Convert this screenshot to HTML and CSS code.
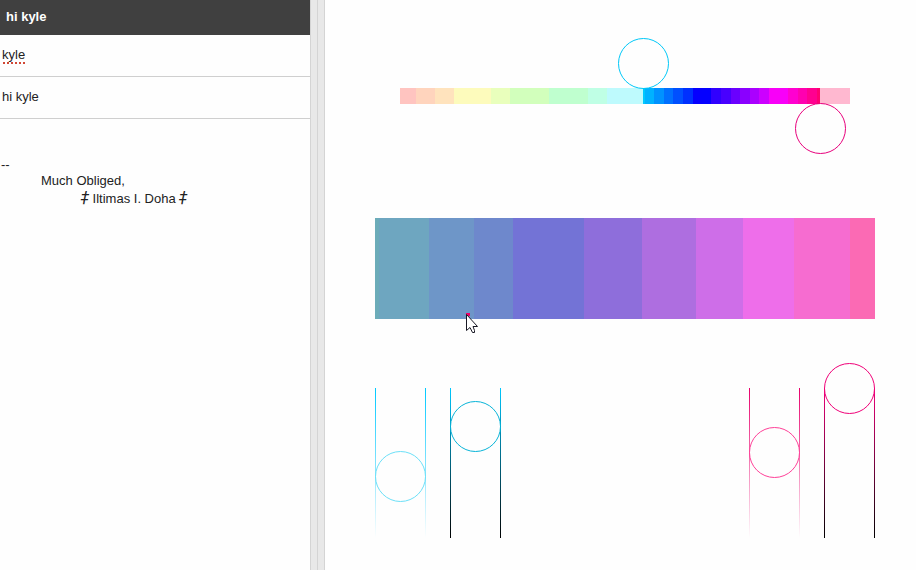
FILE: index.html
```html
<!DOCTYPE html>
<html lang="en">
<head>
<meta charset="utf-8">
<title>hi kyle</title>
<link rel="stylesheet" href="styles.css">
</head>
<body>
<main class="split">
  <section class="compose">
    <h1 class="compose-title">hi kyle</h1>
    <input class="field misspelled" aria-label="To" value="kyle" spellcheck="false">
    <input class="field" aria-label="Subject" value="hi kyle" spellcheck="false">
    <div class="message">
      <p class="rule">--</p>
      <p class="indent">Much Obliged,</p>
      <p class="indent-more"><i class="mark">‡</i> Iltimas I. Doha <i class="mark">‡</i></p>
    </div>
  </section>
  <div class="splitter"></div>
  <section class="picker">
    <input class="hue hue-start" type="range" min="0" max="450" value="243" aria-label="Start hue">
    <div class="spectrum" id="spectrum"></div>
    <input class="hue hue-end" type="range" min="0" max="450" value="420" aria-label="End hue">
    <div class="swatch" id="swatch">
      <svg class="pointer" viewBox="0 0 14 22" aria-hidden="true">
        <path d="M0 0h4v3H0z" fill="#f0006a"/>
        <path d="M0.500 1.500V17.500L4 14.500L6.500 19.500H8.500V17.500L7 13.500H11.500Z" fill="#fff" stroke="#181824"/>
      </svg>
    </div>
    <div class="tones">
      <div class="pair">
        <input class="tone start-sat" type="range" min="0" max="150" value="88" aria-label="Start saturation">
        <input class="tone start-light" type="range" min="0" max="150" value="38" aria-label="Start lightness">
      </div>
      <div class="pair">
        <input class="tone end-sat" type="range" min="0" max="150" value="64" aria-label="End saturation">
        <input class="tone end-light" type="range" min="0" max="150" value="0" aria-label="End lightness">
      </div>
    </div>
  </section>
</main>
<script src="bands.js"></script>
</body>
</html>
```
FILE: bands.js
```js
const bands = {
  spectrum: [
    [16, "#ffc4c0"], [19, "#ffd4bd"], [19, "#ffe3bd"], [37, "#fdfbbc"], [19, "#e9ffbc"],
    [39, "#d2ffbc"], [39, "#bfffcf"], [19, "#bfffe5"], [36, "#befafd"],
    [2, "#00c8ff"], [9, "#00b2ff"], [10, "#0092ff"], [9, "#0070ff"], [10, "#0050ff"],
    [10, "#0030ff"], [18, "#0500ff"], [10, "#3000ff"], [10, "#4800ff"], [9, "#6a00ff"],
    [10, "#8a00ff"], [9, "#aa00ff"], [10, "#cc00ff"], [19, "#f800f8"], [10, "#ff00d0"],
    [9, "#ff00b0"], [10, "#ff0090"], [3, "#ff0070"], [30, "#ffb8d0"]
  ],
  swatch: [
    [4, "#6cacb9"], [50, "#6ea6c0"], [45, "#6e96c8"], [39, "#6e88cc"], [71, "#7373d6"],
    [58, "#8e6edb"], [54, "#ae6ee0"], [47, "#ce6ee8"], [51, "#ee6eea"], [56, "#f66cd0"],
    [25, "#fb6ab4"]
  ]
};
for (const [id, list] of Object.entries(bands)) {
  const bar = document.getElementById(id);
  for (const [share, color] of list) {
    const band = document.createElement("span");
    band.style.flexGrow = share;
    band.style.background = color;
    bar.append(band);
  }
}
```
FILE: styles.css
```css
* { box-sizing: border-box; }
body {
  margin: 0;
  background: #fefefe;
  color: #222;
  font: 13px/18px "Liberation Sans", Arial, sans-serif;
}
p, h1 { margin: 0; }
.split { display: flex; min-height: 100vh; }
.compose { flex: 0 0 34%; max-width: 310px; }
.compose-title {
  padding: 8px 6px 9px;
  background: #404040;
  color: #fff;
  font-size: 13px;
  line-height: 18px;
}
.field {
  display: block;
  width: 100%;
  height: 42px;
  padding: 0 2px 2px;
  border: 0;
  border-bottom: 1px solid #cfcfcf;
  background: transparent;
  color: inherit;
  font: inherit;
  outline: 0;
}
.misspelled {
  background: repeating-linear-gradient(90deg, #d14836 0 2px, transparent 2px 4px) 3px 27px / 23px 2px no-repeat;
}
.message { padding: 39px 1px; }
.rule { line-height: 14px; }
.indent { padding-left: 40px; }
.indent-more { padding-left: 80px; }
.mark { font-family: "DejaVu Sans", sans-serif; font-size: 16px; line-height: 1; }
.splitter {
  flex: 0 0 15px;
  border: solid #d4d4d4;
  border-width: 0 1px;
  background: linear-gradient(#d4d4d4, #d4d4d4) 6px 0 / 1px 100% no-repeat #e8e8e8;
}
.picker { flex: 1; max-width: 591px; padding: 38px 40px 0 50px; }

input[type="range"] {
  -webkit-appearance: none;
  appearance: none;
  display: block;
  margin: 0;
  background: none;
}
input[type="range"]::-webkit-slider-thumb {
  -webkit-appearance: none;
  width: 51px;
  height: 51px;
  border: 1px solid var(--ring);
  border-radius: 50%;
}
.hue { width: 100%; height: 51px; position: relative; }
.hue-start { --ring: #00c8f8; }
.hue-end { --ring: #e8007c; }
.spectrum { display: flex; height: 16px; margin: -1px 26px -1px 25px; }
.spectrum span, .swatch span { flex: 1 1 0; }
.swatch { display: flex; position: relative; height: 101px; margin: 64px 1px 44px 0; }
.pointer { position: absolute; left: 91px; top: 95px; width: 14px; height: 22px; }

.tones { display: flex; justify-content: space-between; padding-right: 1px; }
.pair { display: flex; gap: 24px; }
.tone {
  --rail: linear-gradient(var(--from), var(--to));
  writing-mode: vertical-lr;
  width: 51px;
  height: 201px;
}
input.tone {
  background: var(--rail) 0 25px / 1px 150px no-repeat, var(--rail) 100% 25px / 1px 150px no-repeat;
}
.start-sat { --ring: #6ce0f8; --from: #00c8ff; --to: #00c8ff00; }
.start-light { --ring: #08b4d8; --from: #00c8ff; --to: #000; }
.end-sat { --ring: #ff4098; --from: #e8006c; --to: #ff007000; }
.end-light { --ring: #f00078; --from: #f0007c; --to: #000; }
```
